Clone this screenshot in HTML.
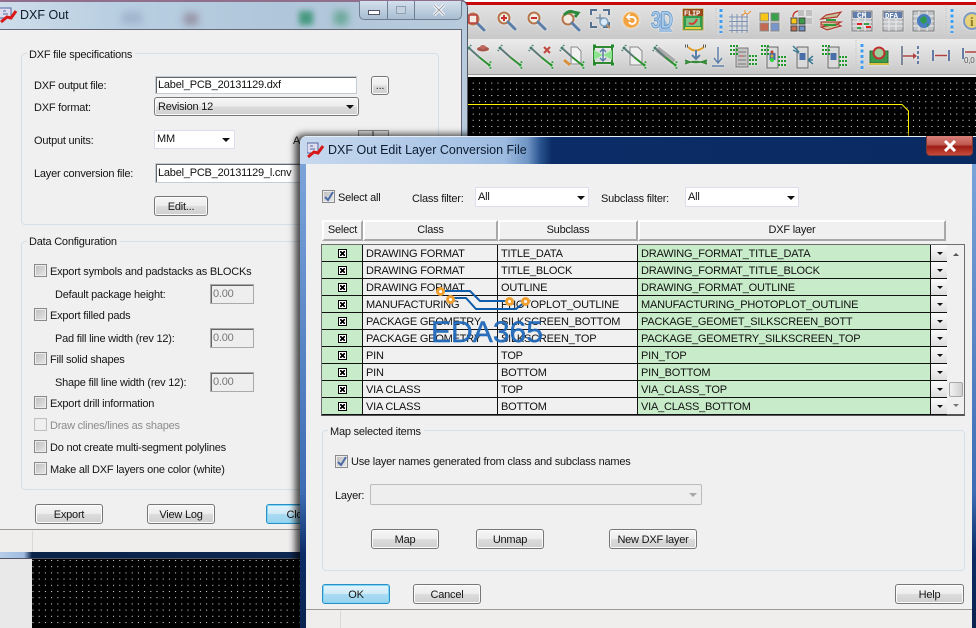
<!DOCTYPE html>
<html><head><meta charset="utf-8"><title>DXF Out</title>
<style>
html,body{margin:0;padding:0;width:976px;height:628px;overflow:hidden;background:#000}
*{box-sizing:border-box}
#p{position:absolute;left:0;top:0;width:976px;height:628px;overflow:hidden;font-family:"Liberation Sans",sans-serif;font-size:11px;letter-spacing:-.22px;color:#111}
.a{position:absolute}
.t{position:absolute;white-space:nowrap;line-height:16px;margin-top:1px;font-size:11px;color:#151515}
.b{position:absolute;height:20px;border:1px solid #777;border-radius:3px;background:linear-gradient(#f6f6f6 0,#ededed 48%,#dcdcdc 52%,#cfcfcf 100%);box-shadow:inset 0 0 0 1px #fbfbfb;text-align:center;line-height:20px;font-size:11px;color:#151515;white-space:nowrap;overflow:hidden}
.bd{border-color:#2b8fc4;background:linear-gradient(#e4f5fc 0,#cfeaf7 48%,#a9dbf3 52%,#98d3ee 100%);box-shadow:inset 0 0 0 1px #7fd8f8}
.i{position:absolute;background:#fff;border:1px solid #c4ccd4;box-shadow:inset 1px 1px 0 #666;line-height:18px;font-size:11px;padding-left:2px;white-space:nowrap;overflow:hidden}
.c{position:absolute;width:13px;height:13px;border:1px solid #8a8a8a;background:linear-gradient(135deg,#bdbdbd,#e8e8e8);box-shadow:inset 0 0 0 1px #ececec}
.g{position:absolute;border:1px solid #d5dfe8;border-radius:4px}
.l{position:absolute;background:#f0f0f0;padding:0 3px 0 2px;margin-top:1px;line-height:14px;font-size:11px;color:#151515;white-space:nowrap}
.d{position:absolute;width:44px;height:20px;border:1px solid #aaa;background:#eee;box-shadow:inset 1px 1px 0 #666;color:#777;font-size:11px;line-height:19px;padding-left:2px}
.ar{position:absolute;width:0;height:0;border-left:4px solid transparent;border-right:4px solid transparent;border-top:4px solid #111}
table{border-collapse:separate;border-spacing:0;table-layout:fixed;position:absolute;left:322px;top:245px;width:625px}
td{height:17px;padding:2px 0 0 3px;border-right:1px solid #111;border-bottom:1px solid #111;background:#f0f0f0;font-size:11px;line-height:14px;letter-spacing:-.2px;color:#111;white-space:nowrap;overflow:hidden}
td.s{background:#c8ecc9;padding:4px 0 0 16px;line-height:0;vertical-align:top}
td.s svg{display:block}
td.n{background:#c8ecc9}
td.k{background:linear-gradient(#fbfbfb,#dedede);padding:0;border-right:0;position:relative}
td.k i{position:absolute;left:6px;top:7px;border-left:3px solid transparent;border-right:3px solid transparent;border-top:3px solid #111}
.h{position:absolute;top:220px;height:21px;background:#f0f0f0;border:2px solid;border-color:#fff #a8a8a8 #a8a8a8 #fff;text-align:center;font-size:11px;line-height:17px;color:#151515}
</style></head><body><div id="p">

<!-- background app -->
<div class="a" style="left:0;top:0;width:976px;height:628px;background:#000"></div>
<div class="a" style="left:0;top:558px;width:32px;height:70px;background:#e9e9e9"></div>
<div class="a" style="left:440px;top:0;width:536px;height:77px;background:#dcdcdc"></div>
<div class="a" style="left:440px;top:0;width:536px;height:2px;background:#fff"></div>
<div class="a" style="left:440px;top:2px;width:536px;height:3px;background:#c80808"></div>
<div class="a" style="left:440px;top:5px;width:536px;height:34px;background:linear-gradient(#e2e2e2,#c9c9c9)"></div>
<div class="a" style="left:440px;top:39px;width:536px;height:35px;background:linear-gradient(#ececec,#c8c8c8)"></div>
<div class="a" style="left:440px;top:74px;width:536px;height:1px;background:#9a9a9a"></div>
<div class="a" style="left:440px;top:75px;width:536px;height:2px;background:#f6f6f6"></div>

<svg class="a" style="left:467px;top:0;filter:drop-shadow(0 0 1px #f2f2f2)" width="509" height="77" viewBox="467 0 509 77">
<defs>
<g id="mag"><circle cx="0" cy="0" r="5.5" fill="#f2ebe2" stroke="#b5764c" stroke-width="2"/><path d="M4 4l7 7" stroke="#5b7ea8" stroke-width="3" stroke-linecap="round"/></g>
<g id="net"><path d="M-10-8L0 1" stroke="#5c7a78" stroke-width="2"/><path d="M0 1L10 9" stroke="#2f8f32" stroke-width="2"/><path d="M-10-8l-1-2M-10-8l-2 3M-10-8l2-3" stroke="#3f7f70" stroke-width="2" stroke-dasharray="1.5 1"/><path d="M10 9h2M10 9l2-4M10 9l2 4" stroke="#1f9a2a" stroke-width="2" stroke-dasharray="1.5 1"/></g>
<g id="tab"><rect x="-10" y="-10" width="20" height="20" fill="#c4c6c9" stroke="#7f7f7f"/><path d="M-10-3h20M-10 1h20M-10 5h20M-4-10v20M3-10v20" stroke="#eee"/><rect x="-9" y="-9" width="18" height="6" fill="#5f7cab"/></g>
<g id="sw"><rect x="-5" y="-10" width="11" height="21" fill="#dadada" stroke="#666"/><rect x="-2.5" y="-4" width="6" height="7" fill="#4a6ea8"/></g>
<g id="fk"><path d="M0-4h8M0 0h8M0 4h8" stroke="#1f9a2a" stroke-width="2" stroke-dasharray="2 1"/></g>
</defs>
<use href="#mag" x="473" y="19"/><rect x="469" y="15" width="8" height="8" fill="none" stroke="#c04040" stroke-width="1.5"/>
<use href="#mag" x="504" y="18"/><path d="M501 18h6M504 15v6" stroke="#c83030" stroke-width="2"/>
<use href="#mag" x="534" y="18"/><path d="M531 18h6" stroke="#c83030" stroke-width="2"/>
<use href="#mag" x="568" y="19"/><path d="M564 15q5-5 9-3l5 1-3 4" fill="none" stroke="#2c8a3c" stroke-width="3"/>
<path d="M591 15v-5h6M603 10h6v5M609 22v5h-6M597 27h-6v-5" fill="none" stroke="#53708e" stroke-width="2"/><path d="M596 18h8M600 14v8" stroke="#7f93a8" stroke-width="1.5"/><circle cx="604" cy="22" r="4" fill="#dcebf7" stroke="#7fa0bc" stroke-width="1.5"/><path d="M607 25l3 3" stroke="#c49060" stroke-width="2"/>
<circle cx="631" cy="20" r="8" fill="#f0a340" stroke="#f6c98c"/><path d="M628 17h4a3.5 3.5 0 1 1-3 5" fill="none" stroke="#fff" stroke-width="2"/><path d="M630 14l-3 3 3 3" fill="none" stroke="#fff" stroke-width="1.5"/>
<path d="M660 12l13 20h-14z" fill="#9fbfe0"/>
<text x="651" y="28" font-family="Liberation Sans" font-size="24" font-weight="bold" fill="#a9cbe8" stroke="#5c90c4" stroke-width=".8" textLength="22" lengthAdjust="spacingAndGlyphs">3D</text>
<rect x="683" y="9" width="20" height="21" fill="#2f9a4a" stroke="#b8a040"/><rect x="683" y="9" width="20" height="7" fill="#9a4a18"/><text x="684" y="15.5" font-family="Liberation Mono" font-size="7" font-weight="bold" fill="#fff">FLIP</text><rect x="686" y="18" width="14" height="8" fill="#7cc48a"/><path d="M689 23q5 3 8-4" fill="none" stroke="#d04030" stroke-width="2"/><rect x="685" y="27" width="16" height="2" fill="#e6d040"/>
<path d="M721 9v24" stroke="#3f9df0" stroke-width="3" stroke-dasharray="3 2.5"/><path d="M716 8v30M946 6v32M856 40v34" stroke="#bdbdbd" stroke-dasharray="1 1"/>
<path d="M729 17h19M729 21.500h19M729 26h19M729 30.500h19M732 14v19M737 14v19M742 14v19M747 14v19" stroke="#7c91b2"/><path d="M742 16l3-3 3 1M745 13v-3M748 14l3-3" stroke="#e89030" fill="none"/>
<rect x="760" y="13" width="8.500" height="8" fill="#f5c518" stroke="#8a8a8a"/><rect x="771" y="13" width="8" height="8" fill="#3aa04a" stroke="#8a8a8a"/><rect x="760" y="23" width="8.500" height="8" fill="#c46a50" stroke="#8a8a8a"/><rect x="771" y="23" width="8" height="8" fill="#7896cc" stroke="#8a8a8a"/>
<rect x="798" y="10" width="6" height="6" fill="#c0c0c0"/><rect x="806" y="10" width="6" height="6" fill="#c0c0c0"/><rect x="806" y="18" width="6" height="6" fill="#c0c0c0"/><rect x="791" y="18" width="6" height="6" fill="#f5c518" stroke="#444"/><rect x="799" y="18" width="6" height="6" fill="#3a9a4a" stroke="#444"/><rect x="791" y="26" width="6" height="5" fill="#c06a50" stroke="#444"/><rect x="799" y="26" width="6" height="5" fill="#7090c8" stroke="#444"/><path d="M793 17q0-5 5-6" fill="none" stroke="#c04030" stroke-width="1.500"/>
<path d="M826 15l15-3-4 5-16 2zM821 22h20l-5 3h-15zM821 27l16-3 4 2-14 4z" fill="#c9c29a" stroke="#b03a30" stroke-width="1.200"/><path d="M826 20h10M824 25h12" stroke="#2f9a3c" stroke-width="2"/>
<use href="#tab" x="862" y="21"/><text x="857" y="18" font-family="Liberation Mono" font-size="8" font-weight="bold" fill="#fff">CM</text><path d="M857 24h5M866 27h5" stroke="#e02020" stroke-width="2"/><path d="M857 28h4M864 24h5" stroke="#3aa04a" stroke-width="2"/>
<use href="#tab" x="893" y="21"/><text x="885" y="18" font-family="Liberation Mono" font-size="7.500" font-weight="bold" fill="#fff">DFA</text>
<rect x="913" y="11" width="21" height="20" fill="#c2c4c7" stroke="#7a7a7a"/><path d="M913 16h21M913 21h21M913 26h21M919 11v20M927 11v20" stroke="#eee"/><circle cx="924" cy="21" r="7" fill="#4b7ec0"/><path d="M920 19q3-4 6-2l1 4-3 3-3-2zM927 23l2 2-2 2z" fill="#2f9a4a"/>
<path d="M952 9v24" stroke="#3f9df0" stroke-width="3" stroke-dasharray="3 2.500"/>
<circle cx="972" cy="21" r="8" fill="#e8d27a" stroke="#7c99c4" stroke-width="2"/><text x="970" y="26" font-family="Liberation Serif" font-size="13" font-weight="bold" fill="#8a7a20">i</text>

<use href="#net" x="479" y="56"/><ellipse cx="483" cy="49" rx="6" ry="2.500" fill="#a8554c"/><ellipse cx="483" cy="47" rx="3" ry="2" fill="#c06a60"/>
<use href="#net" x="510" y="56"/>
<use href="#net" x="541" y="56"/><path d="M544 47l6 6M550 47l-6 6" stroke="#c04a40" stroke-width="2.200"/>
<path d="M571 47h6l4 4v13h-10z" fill="#f2f2f2" stroke="#888"/><use href="#net" x="572" y="56"/><path d="M564 60l6 5" stroke="#d8903a" stroke-width="3"/>
<rect x="594" y="47" width="18" height="16" fill="none" stroke="#2f8a32" stroke-width="2"/><path d="M594 50l9 5-9 5zM612 50l-9 5 9 5z" fill="#8ee48e"/><path d="M603 49v12M600 52l3-3 3 3M600 58l3 3 3-3" fill="none" stroke="#5b7ea8" stroke-width="1.500"/><path d="M593 46h3M611 46h3M593 64h3M611 64h3" stroke="#1f8a2a" stroke-width="3"/>
<path d="M630 47h8l4 4v14h-12z" fill="#eee" stroke="#888"/><use href="#net" x="634" y="56"/>
<path d="M657 49l17 13" stroke="#aaa" stroke-width="6"/><use href="#net" x="665" y="56"/>
<path d="M688 47q7 7 16 0" fill="none" stroke="#e0a030" stroke-width="2"/><path d="M685 46h4M703 46h4" stroke="#555" stroke-width="3" stroke-dasharray="1 1"/><path d="M685 60q10 5 22 0M685 64q10-5 22 0M685 62h22" fill="none" stroke="#3a8a3c" stroke-width="1.500"/><path d="M696 50v8M692 55l4 4 4-4" fill="none" stroke="#5b7ea8" stroke-width="2"/>
<path d="M718 47v16M714 58l4 5 4-5M712 66h12" fill="none" stroke="#5f80a8" stroke-width="1.500"/>
<rect x="736" y="48" width="12" height="19" fill="#c4c4c4" stroke="#777"/><path d="M738 52h8M738 56h8M738 60h8M738 64h8" stroke="#777"/><path d="M740 56h3" stroke="#d04030"/><use href="#fk" x="730" y="50"/><use href="#fk" x="749" y="60"/>
<use href="#sw" x="772" y="57"/><circle cx="772" cy="52" r="1.500" fill="#c04030"/><circle cx="772" cy="56" r="1.500" fill="#d0b030"/><circle cx="772" cy="60" r="2" fill="#30d040"/><use href="#fk" x="761" y="50"/><use href="#fk" x="778" y="61"/>
<use href="#sw" x="802" y="57"/><path d="M793 46l6 6M793 50l6 3M808 60l5-4M808 60l5 0M808 60l5 4" stroke="#3c7a90" stroke-width="1.500"/>
<use href="#sw" x="833" y="57"/><use href="#fk" x="822" y="50"/><use href="#fk" x="839" y="61"/>
<path d="M862 44v27" stroke="#3f9df0" stroke-width="3" stroke-dasharray="3 2.500"/>
<rect x="870" y="51" width="18" height="12" fill="#3a9a4a" stroke="#2a6a3a"/><rect x="869" y="63" width="20" height="2" fill="#d8c040"/><circle cx="879" cy="53" r="5.500" fill="#9ed09e" stroke="#c03030" stroke-width="2"/>
<path d="M902 46v19" stroke="#5a6a80" stroke-width="1.500"/><path d="M903 56h12" stroke="#b04040" stroke-width="1.500"/><path d="M913 53l4 3-4 3z" fill="#b04040"/><path d="M918 46v19" stroke="#3a5a90" stroke-width="1.500" stroke-dasharray="3 2"/>
<path d="M933 50v11M949 50v11" stroke="#3a5a90" stroke-width="1.500"/><path d="M935 55.500h12" stroke="#b04040" stroke-width="1.500"/>
<path d="M963 48v11" stroke="#3a5a90" stroke-width="1.500"/><path d="M965 52h11" stroke="#b04040" stroke-width="1.500"/><text x="964" y="63" font-family="Liberation Sans" font-size="8" fill="#555">0,0</text>
</svg>

<svg class="a" style="left:0;top:0" width="976" height="628">
<defs><pattern id="dp" x="1.500" y="2" width="6.200" height="6.200" patternUnits="userSpaceOnUse"><rect width="1" height="1" fill="#e8e8e8"/></pattern></defs>
<rect x="467" y="78" width="509" height="60" fill="url(#dp)"/>
<rect x="32" y="560" width="268" height="68" fill="url(#dp)"/>
<path d="M467 104.500H902L908.500 111V136" fill="none" stroke="#fff200" stroke-width="1"/>
</svg>

<!-- DXF Out window -->
<div class="a" style="left:-6px;top:0;width:473px;height:558px;border-radius:0 8px 0 0;background:linear-gradient(90deg,#d0deea 0,#b9cfe2 25%,#b0c6da 60%,#b7cbdd 100%);box-shadow:0 0 0 1px #556;overflow:hidden">
<div class="a" style="left:0;top:0;width:473px;height:2px;background:#8f6f8c"></div>
<div class="a" style="left:128px;top:12px;width:20px;height:12px;background:#a0b4cc;filter:blur(4px)"></div>
<div class="a" style="left:190px;top:13px;width:14px;height:12px;background:#8a7a8c;filter:blur(4px);opacity:.7"></div>
<div class="a" style="left:305px;top:11px;width:14px;height:14px;background:#2c8f6a;filter:blur(3px);opacity:.8"></div>
<div class="a" style="left:340px;top:11px;width:14px;height:14px;background:#4a9a7a;filter:blur(4px);opacity:.7"></div>
<div class="a" style="left:0;top:552px;width:473px;height:6px;background:linear-gradient(90deg,#bcd2ec 0,#9fbbe0 30px,#0a2348 38px,#0e2a58 100%)"></div>
</div>
<svg class="a" style="left:0;top:7px" width="18" height="18"><rect x="-2" y="1" width="13" height="10" fill="#dde" stroke="#5566a0"/><path d="M3 4h3M3 7h5" stroke="#5566a0"/><path d="M1 15l6-5 4 1 5-7" fill="none" stroke="#d81818" stroke-width="3"/></svg>
<div class="a" style="left:20px;top:6px;font-size:12.500px;letter-spacing:0;line-height:18px;color:#0e1c2c;white-space:nowrap">DXF Out</div>

<div class="a" style="left:359px;top:1px;width:103px;height:19px;border:1px solid #6f7f90;border-top:0;border-radius:0 0 5px 5px;background:linear-gradient(#d4e0ec,#a7bdd2)"></div>
<div class="a" style="left:387px;top:1px;width:1px;height:18px;background:#6f7f90"></div>
<div class="a" style="left:414px;top:1px;width:1px;height:18px;background:#6f7f90"></div>
<div class="a" style="left:368px;top:10px;width:12px;height:5px;background:#fff;border:1px solid #556"></div>
<div class="a" style="left:396px;top:6px;width:10px;height:8px;border:1px solid #8fa0b0;background:#c5d3e0"></div>
<svg class="a" style="left:432px;top:4px" width="14" height="12"><path d="M2 1l10 10M12 1L2 11" stroke="#fff" stroke-width="3"/><path d="M2 1l10 10M12 1L2 11" stroke="#556" stroke-width="1" opacity=".6"/></svg>

<div class="a" style="left:0;top:29px;width:462px;height:501px;background:#f0f0f0;border-top:1px solid #667;border-right:1px solid #667;border-bottom:1px solid #999"></div>
<div class="a" style="left:0;top:530px;width:461px;height:22px;background:#f0eded"></div>
<div class="a" style="left:32px;top:531px;width:1px;height:21px;background:#d8d8d8"></div>

<div class="g" style="left:21px;top:53px;width:418px;height:172px"></div>
<div class="l" style="left:27px;top:47px">DXF file specifications</div>
<div class="t" style="left:34px;top:77px">DXF output file:</div>
<div class="t" style="left:34px;top:99px">DXF format:</div>
<div class="t" style="left:34px;top:132px">Output units:</div>
<div class="t" style="left:34px;top:165px">Layer conversion file:</div>
<div class="i" style="left:155px;top:76px;width:202px;height:18px;line-height:17px">Label_PCB_20131129.dxf</div>
<div class="b" style="left:371px;top:76px;width:18px;height:19px;line-height:18px">...</div>
<div class="b" style="left:154px;top:97px;width:205px;height:19px;text-align:left;padding-left:3px;line-height:19px">Revision 12</div>
<div class="ar" style="left:346px;top:105px"></div>
<div class="a" style="left:154px;top:130px;width:81px;height:19px;background:#fff;border:1px solid #dde;line-height:17px;padding-left:2px;font-size:11px;white-space:nowrap">MM</div>
<div class="ar" style="left:222px;top:138px"></div>
<div class="i" style="left:155px;top:163px;width:146px;height:20px;line-height:19px">Label_PCB_20131129_l.cnv</div>
<div class="b" style="left:154px;top:196px;width:54px;height:20px">Edit...</div>
<div class="t" style="left:293px;top:132px">A</div>
<div class="a" style="left:358px;top:130px;width:15px;height:7px;border:1px solid #888;background:#ddd"></div>
<div class="a" style="left:373px;top:130px;width:16px;height:7px;border:1px solid #888;background:#ddd"></div>

<div class="g" style="left:21px;top:241px;width:418px;height:249px"></div>
<div class="l" style="left:27px;top:234px">Data Configuration</div>
<div class="c" style="left:34px;top:264px"></div><div class="t" style="left:50px;top:263px">Export symbols and padstacks as BLOCKs</div>
<div class="t" style="left:55px;top:286px">Default package height:</div><div class="d" style="left:210px;top:284px">0.00</div>
<div class="c" style="left:34px;top:308px"></div><div class="t" style="left:50px;top:307px">Export filled pads</div>
<div class="t" style="left:55px;top:330px">Pad fill line width (rev 12):</div><div class="d" style="left:210px;top:328px">0.00</div>
<div class="c" style="left:34px;top:352px"></div><div class="t" style="left:50px;top:351px">Fill solid shapes</div>
<div class="t" style="left:55px;top:374px">Shape fill line width (rev 12):</div><div class="d" style="left:210px;top:372px">0.00</div>
<div class="c" style="left:34px;top:396px"></div><div class="t" style="left:50px;top:395px">Export drill information</div>
<div class="c" style="left:34px;top:418px;background:#f0f0f0;border-color:#c0c0c0"></div><div class="t" style="left:50px;top:417px;color:#8c8c8c">Draw clines/lines as shapes</div>
<div class="c" style="left:34px;top:440px"></div><div class="t" style="left:50px;top:439px">Do not create multi-segment polylines</div>
<div class="c" style="left:34px;top:462px"></div><div class="t" style="left:50px;top:461px">Make all DXF layers one color (white)</div>
<div class="b" style="left:35px;top:504px;width:68px">Export</div>
<div class="b" style="left:147px;top:504px;width:68px">View Log</div>
<div class="b bd" style="left:266px;top:504px;width:68px">Close</div>

<!-- Edit Layer dialog -->
<div class="a" style="left:300px;top:136px;width:690px;height:510px;border-radius:7px 0 0 0;background:linear-gradient(#7fa8dc 0,#3d6cb4 70%,#0b2b66 82%,#0a2148 100%);box-shadow:-3px 0 7px 2px rgba(0,0,0,.7);border-top:1px solid #e8eef5;overflow:hidden">
<div class="a" style="left:0;top:0;width:690px;height:27px;background:linear-gradient(90deg,#c7d9ee 0,#a9c4e6 160px,#9dbbe0 205px,#6f95c4 228px,#2a5590 240px,#0b2c66 252px,#0a2a62 100%)"></div>
</div>
<svg class="a" style="left:307px;top:142px" width="18" height="18"><rect x="0" y="1" width="11" height="10" fill="#dde" stroke="#5566a0"/><path d="M3 4h3M3 7h5" stroke="#5566a0"/><path d="M1 15l6-5 4 1 5-7" fill="none" stroke="#d81818" stroke-width="3"/></svg>
<div class="a" style="left:328px;top:141px;font-size:12.500px;letter-spacing:0;line-height:18px;color:#0c1c30;white-space:nowrap">DXF Out Edit Layer Conversion File</div>
<div class="a" style="left:926px;top:136px;width:47px;height:20px;border:1px solid #7a3a3a;border-top:0;border-radius:0 0 4px 4px;background:linear-gradient(#d8807a 0,#c05a50 45%,#9c1c14 55%,#c84a3a 100%)"></div>
<svg class="a" style="left:943px;top:140px" width="14" height="12"><path d="M2 1l10 10M12 1L2 11" stroke="#fff" stroke-width="3"/></svg>

<div class="a" style="left:306px;top:164px;width:666px;height:446px;background:#f0f0f0;border-bottom:1px solid #999"></div>
<div class="a" style="left:306px;top:610px;width:666px;height:18px;background:#f0eded"></div>
<div class="a" style="left:340px;top:611px;width:1px;height:17px;background:#d8d8d8"></div>

<div class="c" style="left:322px;top:190px"></div>
<svg class="a" style="left:324px;top:191px" width="10" height="11"><path d="M1 6l3 3 5-8" fill="none" stroke="#4a6aa8" stroke-width="2"/></svg>
<div class="t" style="left:338px;top:189px">Select all</div>
<div class="t" style="left:412px;top:190px">Class filter:</div>
<div class="a" style="left:475px;top:187px;width:114px;height:20px;background:#fff;border:1px solid #dde;font-size:11px;line-height:18px;padding-left:2px">All</div>
<div class="ar" style="left:577px;top:196px"></div>
<div class="t" style="left:601px;top:190px">Subclass filter:</div>
<div class="a" style="left:685px;top:187px;width:114px;height:20px;background:#fff;border:1px solid #dde;font-size:11px;line-height:18px;padding-left:2px">All</div>
<div class="ar" style="left:787px;top:196px"></div>

<div class="h" style="left:322px;width:41px">Select</div>
<div class="h" style="left:363px;width:135px">Class</div>
<div class="h" style="left:498px;width:140px">Subclass</div>
<div class="h" style="left:638px;width:308px">DXF layer</div>

<div class="a" style="left:321px;top:244px;width:644px;height:172px;border:1px solid #6e6e6e;border-bottom:2px solid #555;background:#f0f0f0"></div>
<svg width="0" height="0" style="position:absolute"><defs><g id="x"><rect x=".5" y=".5" width="8" height="8" fill="#fff" stroke="#000"/><rect x="2" y="2" width="5" height="5" fill="#000"/><path d="M2 3.500l1 1-1 1M7 3.500l-1 1 1 1M3.500 2l1 1 1-1M3.500 7l1-1 1 1" fill="#fff" stroke="#fff" stroke-width=".5"/></g></defs></svg>
<table>
<colgroup><col style="width:41px"><col style="width:135px"><col style="width:140px"><col style="width:293px"><col style="width:16px"></colgroup>
<tr><td class="s"><svg width="9" height="9"><use href="#x"/></svg></td><td>DRAWING FORMAT</td><td>TITLE_DATA</td><td class="n">DRAWING_FORMAT_TITLE_DATA</td><td class="k"><i></i></td></tr>
<tr><td class="s"><svg width="9" height="9"><use href="#x"/></svg></td><td>DRAWING FORMAT</td><td>TITLE_BLOCK</td><td class="n">DRAWING_FORMAT_TITLE_BLOCK</td><td class="k"><i></i></td></tr>
<tr><td class="s"><svg width="9" height="9"><use href="#x"/></svg></td><td>DRAWING FORMAT</td><td>OUTLINE</td><td class="n">DRAWING_FORMAT_OUTLINE</td><td class="k"><i></i></td></tr>
<tr><td class="s"><svg width="9" height="9"><use href="#x"/></svg></td><td>MANUFACTURING</td><td>PHOTOPLOT_OUTLINE</td><td class="n">MANUFACTURING_PHOTOPLOT_OUTLINE</td><td class="k"><i></i></td></tr>
<tr><td class="s"><svg width="9" height="9"><use href="#x"/></svg></td><td>PACKAGE GEOMETRY</td><td>SILKSCREEN_BOTTOM</td><td class="n">PACKAGE_GEOMET_SILKSCREEN_BOTT</td><td class="k"><i></i></td></tr>
<tr><td class="s"><svg width="9" height="9"><use href="#x"/></svg></td><td>PACKAGE GEOMETRY</td><td>SILKSCREEN_TOP</td><td class="n">PACKAGE_GEOMETRY_SILKSCREEN_TOP</td><td class="k"><i></i></td></tr>
<tr><td class="s"><svg width="9" height="9"><use href="#x"/></svg></td><td>PIN</td><td>TOP</td><td class="n">PIN_TOP</td><td class="k"><i></i></td></tr>
<tr><td class="s"><svg width="9" height="9"><use href="#x"/></svg></td><td>PIN</td><td>BOTTOM</td><td class="n">PIN_BOTTOM</td><td class="k"><i></i></td></tr>
<tr><td class="s"><svg width="9" height="9"><use href="#x"/></svg></td><td>VIA CLASS</td><td>TOP</td><td class="n">VIA_CLASS_TOP</td><td class="k"><i></i></td></tr>
<tr><td class="s"><svg width="9" height="9"><use href="#x"/></svg></td><td>VIA CLASS</td><td>BOTTOM</td><td class="n">VIA_CLASS_BOTTOM</td><td class="k"><i></i></td></tr>
</table>
<div class="a" style="left:949px;top:382px;width:14px;height:15px;border:1px solid #a8a8a8;border-radius:2px;background:linear-gradient(90deg,#f2f2f2,#cfcfcf)"></div>
<svg class="a" style="left:950px;top:250px" width="12" height="160"><path d="M3 6l3-3 3 3z" fill="#555"/><path d="M3 154l3 3 3-3z" fill="#777"/></svg>

<!-- watermark -->
<svg class="a" style="left:425px;top:282px" width="130" height="64" viewBox="425 282 130 64">
<path d="M441 291H470L480 301H510M451 298H466L476 309H516L526 301" fill="none" stroke="#0f5cab" stroke-width="2"/>
<g fill="#fff" stroke="#f0a030" stroke-width="3"><circle cx="440.500" cy="291.500" r="3"/><circle cx="450.500" cy="299.500" r="3"/><circle cx="509.500" cy="301.500" r="3"/><circle cx="525.500" cy="301.500" r="3"/></g>
<text x="431" y="342" font-family="Liberation Sans" font-size="30" letter-spacing="0" fill="#1c66b8" fill-opacity=".92" stroke="#1c66b8" stroke-width=".4" textLength="112" lengthAdjust="spacingAndGlyphs">EDA365</text>
</svg>

<div class="g" style="left:322px;top:430px;width:643px;height:141px"></div>
<div class="l" style="left:328px;top:424px">Map selected items</div>
<div class="c" style="left:335px;top:455px"></div>
<svg class="a" style="left:337px;top:456px" width="10" height="11"><path d="M1 6l3 3 5-8" fill="none" stroke="#4a6aa8" stroke-width="2"/></svg>
<div class="t" style="left:351px;top:453px">Use layer names generated from class and subclass names</div>
<div class="t" style="left:335px;top:487px">Layer:</div>
<div class="a" style="left:370px;top:484px;width:332px;height:21px;background:#eeeeee;border:1px solid #bbb;border-radius:2px"></div>
<div class="ar" style="left:689px;top:493px;border-top-color:#a8a8a8"></div>
<div class="b" style="left:371px;top:529px;width:68px">Map</div>
<div class="b" style="left:476px;top:529px;width:68px">Unmap</div>
<div class="b" style="left:609px;top:529px;width:88px">New DXF layer</div>
<div class="b bd" style="left:322px;top:584px;width:68px">OK</div>
<div class="b" style="left:413px;top:584px;width:68px">Cancel</div>
<div class="b" style="left:895px;top:584px;width:69px">Help</div>

</div></body></html>
